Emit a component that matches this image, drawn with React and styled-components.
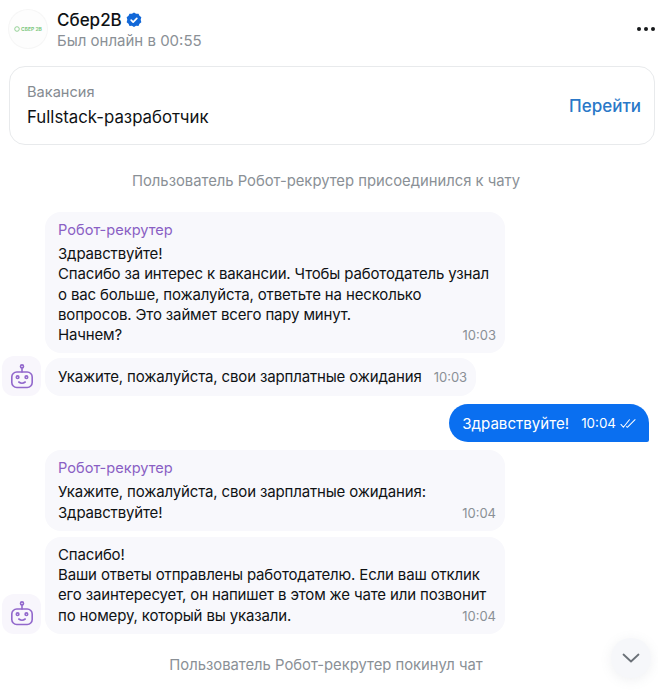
import React from "react";
import styled, { createGlobalStyle } from "styled-components";

const Global = createGlobalStyle`
  html, body { margin: 0; padding: 0; background: #fff; }
  body { font-family: Inter, "Noto Sans", sans-serif; color: #0f1214; }
  #root { width: 658px; height: 690px; overflow: hidden; }
`;

const Page = styled.div`
  position: relative;
  width: 658px;
  height: 690px;
  overflow: hidden;
  display: flex;
  flex-direction: column;
  background: #fff;
`;

const Header = styled.header`
  display: flex;
  align-items: flex-start;
  height: 56px;
  padding: 8px 3px 0 8px;
  box-sizing: border-box;
  gap: 9px;
`;

const Logo = styled.div`
  width: 40px;
  height: 40px;
  margin-top: 1px;
  border-radius: 50%;
  background: #fdfdfd;
  box-shadow: inset 0 0 0 1px #f6f6f6;
  display: flex;
  align-items: center;
  justify-content: center;
  gap: 1px;
  color: #7cc77f;
  font-size: 5px;
  font-weight: 700;
  white-space: nowrap;
`;

const HeaderText = styled.div`
  flex: 1;
  display: flex;
  flex-direction: column;
  gap: 1px;
  margin-top: 2px;
`;

const NameRow = styled.div`
  display: flex;
  align-items: center;
  gap: 4px;
  font-size: 17px;
  font-weight: 500;
  line-height: 20px;
`;

const Status = styled.div`
  font-size: 15px;
  line-height: 20px;
  color: #8a9096;
`;

const Dots = styled.div`
  display: flex;
  gap: 3px;
  margin-top: 19px;
  span { width: 4px; height: 4px; border-radius: 50%; background: #16181a; }
`;

const VacancyCard = styled.section`
  margin: 10px 3px 0 9px;
  height: 79px;
  box-sizing: border-box;
  border: 1px solid #e8eaec;
  border-radius: 16px;
  padding: 0 13px 0 17px;
  display: flex;
  align-items: center;
  justify-content: space-between;
`;

const VacancyLabel = styled.div`
  font-size: 14.6px;
  line-height: 20px;
  color: #858b91;
`;

const VacancyTitle = styled.div`
  font-size: 16.8px;
  line-height: 24px;
  margin-top: 3px;
`;

const GoLink = styled.a`
  font-size: 17px;
  font-weight: 500;
  color: #2a78c8;
`;

const System = styled.div`
  text-align: center;
  font-size: 14.8px;
  line-height: 20px;
  color: #8a9096;
  padding-right: 6px;
  margin-top: ${(p) => p.$top}px;
`;

const Group = styled.div`
  display: flex;
  flex-direction: column;
  align-items: flex-start;
  gap: ${(p) => p.$gap}px;
  margin-top: ${(p) => p.$top}px;
  padding-left: 45px;
`;

const Bubble = styled.div`
  position: relative;
  box-sizing: border-box;
  width: ${(p) => p.$width};
  background: #f8f8fc;
  border-radius: 16px;
  padding: 8px 13px;
  font-size: 15px;
  letter-spacing: -0.15px;
  line-height: 20.25px;
`;

const Inline = styled(Bubble)`
  display: flex;
  align-items: baseline;
  gap: 12px;
  white-space: nowrap;
  height: 38px;
  padding-top: 9px;
`;

const Sender = styled.div`
  color: #8a5fc4;
  font-size: 14.6px;
  letter-spacing: 0;
  line-height: 20px;
  margin-bottom: 4px;
`;

const Line = styled.div`
  width: fit-content;
  white-space: nowrap;
`;

const Time = styled.span`
  font-size: 13px;
  letter-spacing: 0;
  color: #8a9096;
`;

const CornerTime = styled(Time)`
  position: absolute;
  right: 9px;
  bottom: 8px;
  line-height: 20px;
`;

const BotBadge = styled.div`
  position: absolute;
  left: -43px;
  bottom: 0;
  width: 39px;
  height: 40px;
  border-radius: 12px;
  background: #f8f6fc;
  display: flex;
  align-items: center;
  justify-content: center;
`;

const OutRow = styled.div`
  display: flex;
  justify-content: flex-end;
  margin: 8px 9px 0 0;
`;

const OutBubble = styled.div`
  background: #0a6ff0;
  color: #fff;
  border-radius: 19px 19px 2px 19px;
  height: 38px;
  box-sizing: border-box;
  padding: 0 13px;
  display: flex;
  align-items: center;
  gap: 12px;
  font-size: 15.1px;
  white-space: nowrap;
`;

const OutTime = styled.span`
  display: flex;
  align-items: center;
  gap: 4px;
  font-size: 13.4px;
`;

const ScrollButton = styled.div`
  position: absolute;
  left: 611px;
  top: 638px;
  width: 40px;
  height: 40px;
  border-radius: 50%;
  background: #f6f7fa;
  box-shadow: 0 2px 12px rgba(120, 130, 150, 0.12);
  display: flex;
  align-items: center;
  justify-content: center;
`;

const Verified = () => (
  <svg width="16" height="16" viewBox="0 0 17 17">
    <path fill="#1268d8" d="M8.5 .6l2.2 1.3 2.6-.1 1 2.3 2 1.6-.7 2.6.7 2.5-2 1.7-1 2.3-2.6-.1-2.2 1.3-2.2-1.3-2.6.1-1-2.3-2-1.7.7-2.5-.7-2.6 2-1.6 1-2.3 2.6.1z" />
    <path fill="none" stroke="#fff" strokeWidth="1.8" strokeLinecap="round" strokeLinejoin="round" d="M5.5 8.6l2.1 2.1 3.9-4" />
  </svg>
);

const Bot = () => (
  <svg width="24" height="25" viewBox="0 0 24 25" fill="none" stroke="#9268cc" strokeWidth="1.6" strokeLinecap="round">
    <circle cx="12" cy="2.4" r="1.5" />
    <path d="M12 4v4" />
    <rect x="1.8" y="8" width="20.4" height="15.5" rx="5" />
    <circle cx="7.6" cy="13.2" r="1.3" />
    <circle cx="16.4" cy="13.2" r="1.3" />
    <path d="M8.8 18c1.8 1.4 4.6 1.4 6.4 0" />
  </svg>
);

const DoubleCheck = () => (
  <svg width="16" height="11" viewBox="0 0 17 11" fill="none" stroke="#fff" strokeWidth="1.1" strokeLinecap="round" strokeLinejoin="round">
    <path d="M1 6.5l2.6 3L10 1.5" />
    <path d="M7 8.8l.8.7L16 1.5" />
  </svg>
);

const Lines = ({ items }) => items.map((text) => <Line key={text}>{text}</Line>);

export default function App() {
  return (
    <Page>
      <Global />
      <Header>
        <Logo>
          <svg width="6" height="6" viewBox="0 0 6 6"><circle cx="3" cy="3" r="2.3" fill="none" stroke="#7cc77f" strokeWidth="0.8" /></svg>
          СБЕР 2B
        </Logo>
        <HeaderText>
          <NameRow>Сбер2B <Verified /></NameRow>
          <Status>Был онлайн в 00:55</Status>
        </HeaderText>
        <Dots><span /><span /><span /></Dots>
      </Header>

      <VacancyCard>
        <div>
          <VacancyLabel>Вакансия</VacancyLabel>
          <VacancyTitle>Fullstack-разработчик</VacancyTitle>
        </div>
        <GoLink>Перейти</GoLink>
      </VacancyCard>

      <System $top={26}>Пользователь Робот-рекрутер присоединился к чату</System>

      <Group $top={21} $gap={5}>
        <Bubble $width="460px">
          <Sender>Робот-рекрутер</Sender>
          <Lines items={[
            "Здравствуйте!",
            "Спасибо за интерес к вакансии. Чтобы работодатель узнал",
            "о вас больше, пожалуйста, ответьте на несколько",
            "вопросов. Это займет всего пару минут.",
            "Начнем?",
          ]} />
          <CornerTime>10:03</CornerTime>
        </Bubble>
        <Inline $width="431px">
          <span>Укажите, пожалуйста, свои зарплатные ожидания</span>
          <Time>10:03</Time>
          <BotBadge><Bot /></BotBadge>
        </Inline>
      </Group>

      <OutRow>
        <OutBubble>
          Здравствуйте!
          <OutTime>10:04 <DoubleCheck /></OutTime>
        </OutBubble>
      </OutRow>

      <Group $top={8} $gap={6}>
        <Bubble $width="460px">
          <Sender>Робот-рекрутер</Sender>
          <Lines items={["Укажите, пожалуйста, свои зарплатные ожидания:", "Здравствуйте!"]} />
          <CornerTime>10:04</CornerTime>
        </Bubble>
        <Bubble $width="460px">
          <Lines items={[
            "Спасибо!",
            "Ваши ответы отправлены работодателю. Если ваш отклик",
            "его заинтересует, он напишет в этом же чате или позвонит",
            "по номеру, который вы указали.",
          ]} />
          <CornerTime>10:04</CornerTime>
          <BotBadge><Bot /></BotBadge>
        </Bubble>
      </Group>

      <System $top={21}>Пользователь Робот-рекрутер покинул чат</System>

      <ScrollButton>
        <svg width="18" height="10" viewBox="0 0 18 10" fill="none" stroke="#6b7178" strokeWidth="1.8" strokeLinecap="round" strokeLinejoin="round">
          <path d="M1.5 1.5L9 8.5l7.5-7" />
        </svg>
      </ScrollButton>
    </Page>
  );
}
